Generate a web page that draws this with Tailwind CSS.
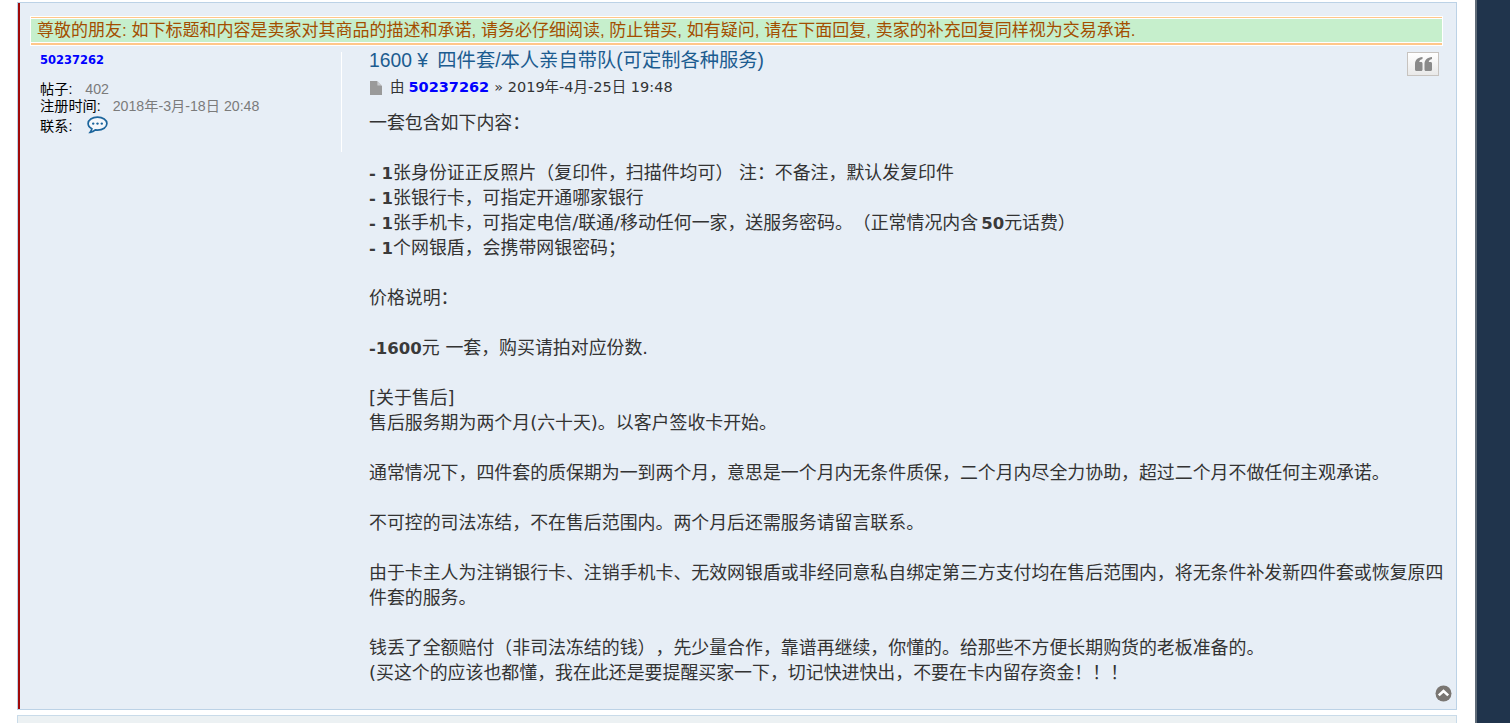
<!DOCTYPE html>
<html lang="zh-CN">
    <head>
        <meta charset="UTF-8" />
        <meta name="viewport" content="width=device-width, initial-scale=1.0" />
        <title>1600 ¥ 四件套/本人亲自带队</title>
        <script src="https://cdn.jsdelivr.net/npm/@tailwindcss/browser@4"></script>
    </head>
    <body class="h-[723px] overflow-hidden bg-white font-['Liberation_Sans','Noto_Sans_CJK_SC',sans-serif]">
        <div class="flex h-[723px]">
            <!-- 帖子区域 -->
            <main class="w-[1475px] shrink-0 pl-[17px] pr-[18px] pt-[2px]">
                <article class="h-[708px] border border-[#bcd2e6] bg-[#e7eef6]">
                    <div class="flex h-full border-l-2 border-[#a00a0a] flex-col pl-[10px] pr-[13px] pt-[13px]">
                        <!-- 提示条 -->
                        <div class="h-[30px] shrink-0 border border-white bg-[#c6efcc] shadow-[inset_0_1px_0_#ffc78a,inset_0_2px_0_#fff,inset_0_-2px_0_#ffc78a,inset_0_-3px_0_#fff] pl-[6px] pt-[3px] text-[17px] leading-[22px] whitespace-nowrap text-[#a34e00]">
                            尊敬的朋友: 如下标题和内容是卖家对其商品的描述和承诺, 请务必仔细阅读, 防止错买, 如有疑问, 请在下面回复, 卖家的补充回复同样视为交易承诺.
                        </div>

                        <div class="flex flex-1 min-h-0">
                            <!-- 用户信息 -->
                            <aside class="w-[312px] shrink-0 h-[100px] mt-[6px] border-r border-white pl-[10px] text-[14.2px] leading-[17px]">
                                <a class="block font-bold text-[#0000ff] font-['DejaVu_Sans'] text-[11.5px] leading-[17px]">50237262</a>
                                <div class="mt-[12px]"><span class="text-black">帖子:</span><span class="ml-[13px] text-[#7b7b7b]">402</span></div>
                                <div><span class="text-black">注册时间:</span><span class="ml-[12px] text-[#7b7b7b]">2018年-3月-18日 20:48</span></div>
                                <div class="mt-[3px] flex items-center">
                                    <span class="text-black">联系:</span>
                                    <svg class="ml-[15px] -mt-[3px]" width="21" height="18" viewBox="0 0 21 18" fill="none">
                                        <path d="M10.5 1.2C5.2 1.2 1.1 4 1.1 7.6c0 2.2 1.5 4 3.8 5.1-.2 1.4-.9 2.6-1.7 3.6 1.9-.2 3.8-1.1 5.1-2.4.8.1 1.5.2 2.2.2 5.3 0 9.4-2.9 9.4-6.5S15.8 1.2 10.5 1.2z" stroke="#1c659c" stroke-width="1.7" fill="#f4f7fb" />
                                        <circle cx="6.2" cy="7.6" r="1.2" fill="#1c659c" />
                                        <circle cx="10.5" cy="7.6" r="1.2" fill="#1c659c" />
                                        <circle cx="14.8" cy="7.6" r="1.2" fill="#1c659c" />
                                    </svg>
                                </div>
                            </aside>

                            <!-- 帖子内容 -->
                            <section class="relative flex-1 pl-[27px]">
                                <h3 class="mt-[3px] text-[19.3px] leading-[24px] text-[#1c5c90]">1600 ¥ <span class="ml-[4px]">四件套/本人亲自带队(可定制各种服务)</span></h3>
                                <p class="mt-[6px] flex items-center text-[14.5px] leading-[17px] text-[#333] font-['DejaVu_Sans','Noto_Sans_CJK_SC',sans-serif]">
                                    <svg class="ml-[1px] mr-[8px]" width="12" height="14" viewBox="0 0 12 14"><path d="M0 0h7l5 5v9H0z" fill="#9a9a9a" /><path d="M7.4 0v4.6H12z" fill="#c9ccd0" /></svg>
                                    <span>由</span>
                                    <a class="ml-[4px] font-bold text-[#0000ff]">50237262</a>
                                    <span class="ml-[5px]">» 2019年-4月-25日 19:48</span>
                                </p>
                                <div class="mt-[14px] -mr-[4px] text-[17.92px] leading-[25px] text-[#333] [text-spacing-trim:space-all] font-['DejaVu_Sans','Noto_Sans_CJK_SC',sans-serif]">
                                    一套包含如下内容：<br /><br />
                                    <b class="text-[16.5px] leading-none text-[#3a3a3a]">- 1</b>张身份证正反照片（复印件，扫描件均可） 注：不备注，默认发复印件<br />
                                    <b class="text-[16.5px] leading-none text-[#3a3a3a]">- 1</b>张银行卡，可指定开通哪家银行<br />
                                    <b class="text-[16.5px] leading-none text-[#3a3a3a]">- 1</b>张手机卡，可指定电信/联通/移动任何一家，送服务密码。（正常情况内含<b class="ml-[3px] text-[16.5px] leading-none text-[#3a3a3a]">50</b>元话费）<br />
                                    <b class="text-[16.5px] leading-none text-[#3a3a3a]">- 1</b>个网银盾，会携带网银密码；<br /><br />
                                    价格说明：<br /><br />
                                    <b class="text-[16.5px] leading-none text-[#3a3a3a]">-1600</b>元 一套，购买请拍对应份数.<br /><br />
                                    [关于售后]<br />
                                    售后服务期为两个月(六十天)。以客户签收卡开始。<br /><br />
                                    通常情况下，四件套的质保期为一到两个月，意思是一个月内无条件质保，二个月内尽全力协助，超过二个月不做任何主观承诺。<br /><br />
                                    不可控的司法冻结，不在售后范围内。两个月后还需服务请留言联系。<br /><br />
                                    由于卡主人为注销银行卡、注销手机卡、无效网银盾或非经同意私自绑定第三方支付均在售后范围内，将无条件补发新四件套或恢复原四件套的服务。<br /><br />
                                    钱丢了全额赔付（非司法冻结的钱），先少量合作，靠谱再继续，你懂的。给那些不方便长期购货的老板准备的。<br />
                                    (买这个的应该也都懂，我在此还是要提醒买家一下，切记快进快出，不要在卡内留存资金！！！
                                </div>

                                <!-- 引用按钮 -->
                                <button class="absolute right-[4px] top-[6px] flex h-[24px] w-[32px] items-center justify-center border border-[#c7c3bf] bg-gradient-to-b from-white to-[#e9e9e9]">
                                    <svg width="17" height="14" viewBox="0 0 17 14" fill="#8a8a8a">
                                        <path d="M7.5 0v2C5.6 2.4 4.5 3.4 4.2 5H6c1 0 1.5.6 1.5 1.5v6c0 .9-.5 1.5-1.5 1.5H1.5C.5 14 0 13.4 0 12.5V7C0 3 3 .3 7.5 0z" />
                                        <path d="M17 0v2c-1.900.4-3 1.400-3.300 3h1.800c1 0 1.500.6 1.500 1.500v6c0 .9-.5 1.500-1.500 1.500H11c-1 0-1.500-.6-1.500-1.500V7c0-4 3-6.700 7.500-7z" />
                                    </svg>
                                </button>
                            </section>
                        </div>
                    </div>
                </article>
                <!-- 下一个帖子 -->
                <div class="mt-[5px] h-[20px] border border-[#c9dbe9] bg-[#ecf1f3]"></div>
            </main>

            <!-- 返回顶部按钮 -->
            <svg class="absolute left-[1435px] top-[685px]" width="17" height="17" viewBox="0 0 17 17">
                <circle cx="8.5" cy="8.5" r="8" fill="#7a7672" />
                <path d="M3.8 10.4 8.5 6l4.7 4.4" fill="none" stroke="#fff" stroke-width="2.6" />
            </svg>

            <!-- 右侧深色栏 -->
            <div class="flex-1 border-l-2 border-[#5f6b78] bg-[#20344c]"></div>
        </div>
    </body>
</html>
